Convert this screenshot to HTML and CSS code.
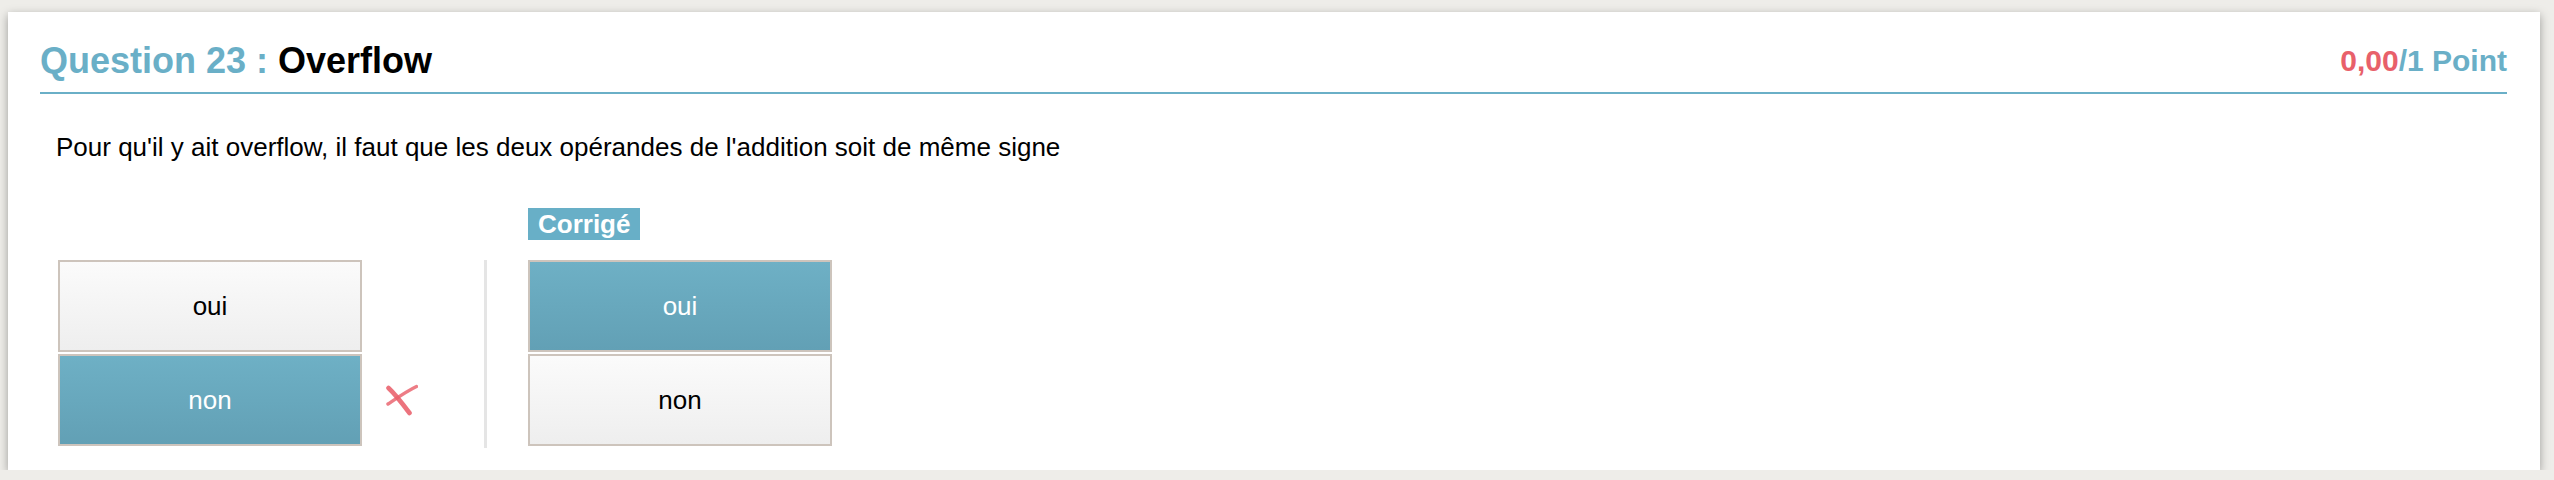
FILE: index.html
```html
<!DOCTYPE html>
<html lang="fr">
<head>
<meta charset="utf-8">
<title>Question 23 : Overflow</title>
<link rel="stylesheet" href="styles.css">
</head>
<body>
<div class="card">
  <div class="head">
    <h2 class="title"><span class="num">Question 23 :</span> Overflow</h2>
    <div class="score"><span class="got">0,00</span>/1 Point</div>
  </div>
  <p class="question">Pour qu'il y ait overflow, il faut que les deux opérandes de l'addition soit de même signe</p>
  <div class="answers">
    <div class="col col-user">
      <div class="row">
        <div class="btn">oui</div>
        <span class="mark"></span>
      </div>
      <div class="row">
        <div class="btn sel">non</div>
        <span class="mark">
          <svg viewBox="0 0 32 32" width="32" height="32">
            <path d="M2.5 4 C9 10 16 19 23.5 29" fill="none" stroke="#e9606b" stroke-width="4.6" stroke-linecap="round" opacity="0.88"/>
            <path d="M2 20 C11 14 21 7 30.5 2.5" fill="none" stroke="#e9606b" stroke-width="3.4" stroke-linecap="round" opacity="0.82"/>
          </svg>
        </span>
      </div>
    </div>
    <div class="divider"></div>
    <div class="col col-key">
      <span class="badge">Corrigé</span>
      <div class="btn sel">oui</div>
      <div class="btn">non</div>
    </div>
  </div>
</div>
</body>
</html>
```

FILE: styles.css
```css
html, body {
  margin: 0;
  padding: 0;
}
body {
  background: #eeede9;
  padding: 12px 14px 0 8px;
  font-family: "Liberation Sans", Arial, sans-serif;
  color: #000;
}
.card {
  background: #fff;
  padding: 0 33px 22px 32px;
  box-shadow: 0 3px 9px rgba(0, 0, 0, 0.35);
}
.head {
  display: flex;
  justify-content: space-between;
  align-items: flex-end;
  padding-top: 29px;
  padding-bottom: 11px;
  border-bottom: 2px solid #6aafc7;
}
.title {
  margin: 0;
  font-size: 36px;
  line-height: 40px;
  font-weight: bold;
  color: #000;
}
.title .num {
  color: #6aafc7;
}
.score {
  font-size: 30px;
  line-height: 40px;
  font-weight: bold;
  color: #6aafc7;
}
.score .got {
  color: #e8606a;
}
.question {
  margin: 38px 0 0 16px;
  font-size: 26px;
  line-height: 30px;
}
.answers {
  display: flex;
  align-items: flex-start;
  margin-top: 46px;
  padding-left: 18px;
}
.col {
  display: flex;
  flex-direction: column;
  gap: 2px;
}
.col-user {
  margin-top: 52px;
}
.row {
  display: flex;
  align-items: center;
  gap: 24px;
}
.mark {
  width: 32px;
  height: 32px;
  display: block;
}
.mark svg {
  display: block;
}
.btn {
  box-sizing: border-box;
  width: 304px;
  height: 92px;
  border: 2px solid #cdc4bc;
  background: linear-gradient(#fbfbfb, #eeeeee);
  display: flex;
  align-items: center;
  justify-content: center;
  font-size: 26px;
  color: #000;
}
.btn.sel {
  background: linear-gradient(#6eb0c5, #62a0b5);
  color: #fff;
}
.divider {
  width: 3px;
  height: 188px;
  margin: 52px 41px 0 66px;
  background: #e5e5e5;
}
.badge {
  align-self: flex-start;
  background: #68afc7;
  color: #fff;
  font-weight: bold;
  font-size: 26px;
  line-height: 32px;
  padding: 0 10px;
  margin-bottom: 18px;
}
```
